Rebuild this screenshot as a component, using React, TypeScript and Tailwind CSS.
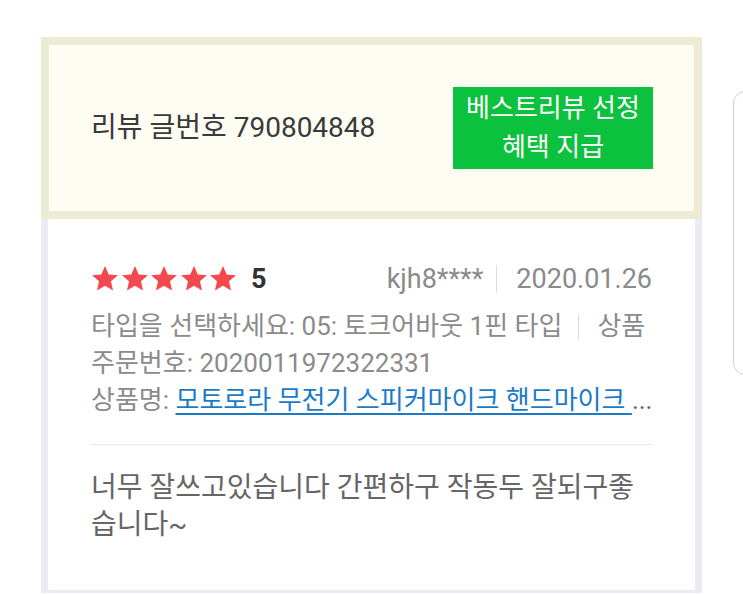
import React from "react";

function Star() {
  return (
    <svg width="28" height="28" viewBox="0 0 24 24" className="block">
      <path
        d="M12 0.8l3.2 7.3 7.9.7-6 5.2 1.8 7.8L12 17.7l-6.9 4.1 1.8-7.8-6-5.2 7.9-.7z"
        fill="#f4484f"
      />
    </svg>
  );
}

export default function App() {
  return (
    <div className="relative w-[743px] h-[594px] overflow-hidden bg-white font-['Roboto','Noto_Sans_CJK_KR',sans-serif]">
      <div className="absolute left-[733px] top-[91px] w-[40px] h-[284px] rounded-[12px] border border-[#cfcfcf] bg-white" />
      <div className="pt-[37px] pl-[41px] w-[702px]">
        <div className="border-[8px] border-[#eeebd5] bg-[#fdfdf4] flex items-center justify-between pl-[42px] pr-[41px] h-[182px]">
          <div className="text-[28px] text-[#3a3a3a]">리뷰 글번호 790804848</div>
          <div className="w-[200px] h-[82px] bg-[#0bc13d] text-white text-[26px] leading-[39px] flex flex-col items-center justify-center">
            <div>베스트리뷰 선정</div>
            <div>혜택 지급</div>
          </div>
        </div>
        <div className="border-x-[7px] border-b-[3px] border-[#e9edf3] bg-white px-[43px] pt-[45px] h-[374px]">
          <div className="flex items-center h-[30px]">
            <div className="flex gap-[1.5px]">
              <Star />
              <Star />
              <Star />
              <Star />
              <Star />
            </div>
            <div className="ml-[14px] text-[27px] font-bold text-[#333]">5</div>
            <div className="ml-auto flex items-center text-[27px] text-[#8a8a8a]">
              <span>kjh8****</span>
              <span className="ml-[13px] mr-[19px] w-px h-[28px] bg-[#dcdcdc]" />
              <span>2020.01.26</span>
            </div>
          </div>
          <div className="mt-[14px] text-[26px] leading-[37px] text-[#8b8b8b]">
            <div className="flex items-center whitespace-nowrap overflow-hidden">
              <span>타입을 선택하세요: 05: 토크어바웃 1핀 타입</span>
              <span className="ml-[16px] mr-[18px] w-px h-[26px] bg-[#dcdcdc]" />
              <span>상품</span>
            </div>
            <div>주문번호: 2020011972322331</div>
            <div className="whitespace-nowrap overflow-hidden">
              <span>상품명: </span>
              <span className="text-[#1c7bc8] underline underline-offset-[4px]">모토로라 무전기 스피커마이크 핸드마이크 </span>
              <span className="text-[#666]">...</span>
            </div>
          </div>
          <div className="mt-[25px] h-px bg-[#e4e6ea]" />
          <div className="mt-[24px] text-[28px] leading-[37px] text-[#666]">
            너무 잘쓰고있습니다 간편하구 작동두 잘되구좋
            <br />
            습니다~
          </div>
        </div>
      </div>
    </div>
  );
}
